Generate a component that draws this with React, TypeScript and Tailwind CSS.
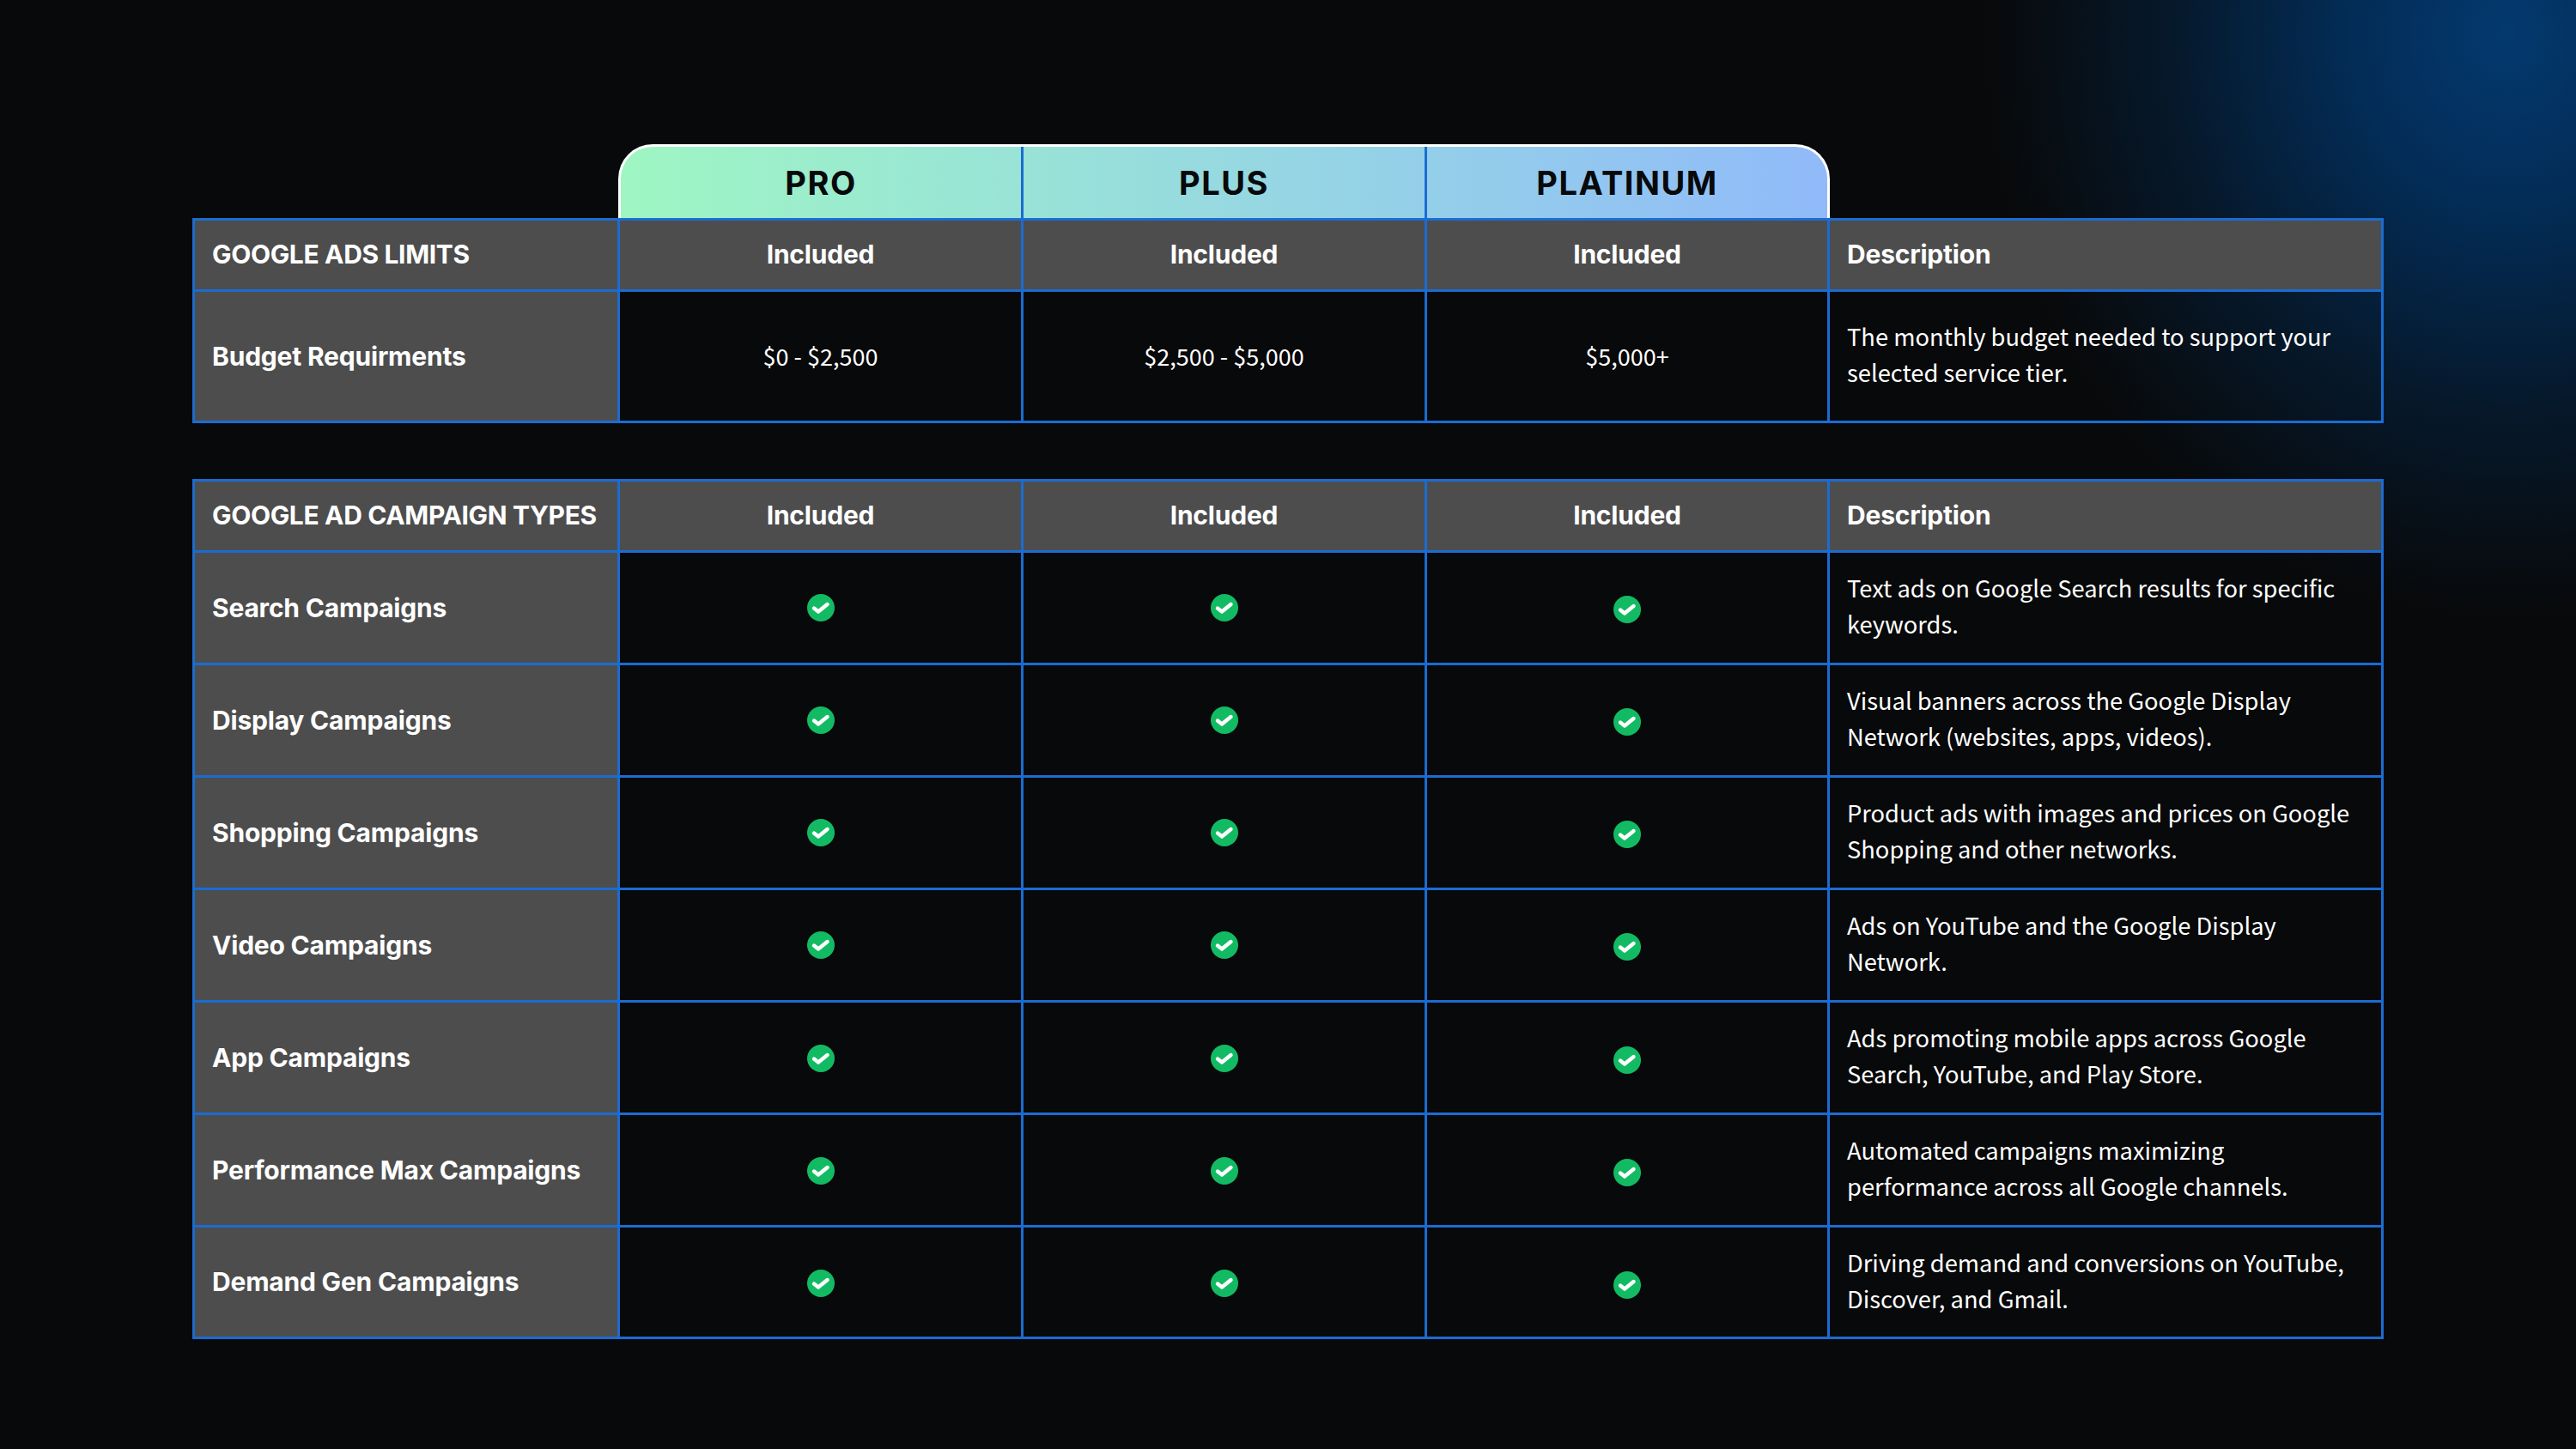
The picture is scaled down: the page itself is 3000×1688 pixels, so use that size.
import React from "react";

const heading = "font-['Inter','Liberation_Sans',sans-serif]";
const body = "font-['Noto_Sans_CJK_JP','Noto_Sans',sans-serif]";
const grid = "grid grid-cols-[495px_470px_470px_469px_1fr]";
const line = "border-[#1b6cd2]";

const campaigns = [
  ["Search Campaigns", "Text ads on Google Search results for specific", "keywords."],
  ["Display Campaigns", "Visual banners across the Google Display", "Network (websites, apps, videos)."],
  ["Shopping Campaigns", "Product ads with images and prices on Google", "Shopping and other networks."],
  ["Video Campaigns", "Ads on YouTube and the Google Display", "Network."],
  ["App Campaigns", "Ads promoting mobile apps across Google", "Search, YouTube, and Play Store."],
  ["Performance Max Campaigns", "Automated campaigns maximizing", "performance across all Google channels."],
  ["Demand Gen Campaigns", "Driving demand and conversions on YouTube,", "Discover, and Gmail."],
];

const Check = ({ low, drift = 0 }: { low?: boolean; drift?: number }) => (
  <svg width="32" height="32" viewBox="0 0 32 32" style={{ marginTop: (low ? 3 : -1) + drift }}>
    <circle cx="16" cy="16" r="16" fill="#12bb63" />
    <path d="M8 16.5 L13 20.5 L23.5 12" fill="none" stroke="#fff" strokeWidth="4.4" strokeLinecap="round" strokeLinejoin="round" />
  </svg>
);

const HeaderRow = ({ title }: { title: string }) => (
  <div className={`${grid} h-[83px] border-b-[3px] ${line} bg-[#4d4d4d] ${heading} text-[30px] font-bold text-white`}>
    <div className={`flex items-center pl-[20px] pb-[1px] border-r-[3px] ${line} tracking-[-0.35px] whitespace-nowrap`}>{title}</div>
    {[0, 1, 2].map((i) => (
      <div key={i} className={`flex items-center justify-center pb-[1px] border-r-[3px] ${line} tracking-[-0.2px]`}>Included</div>
    ))}
    <div className="flex items-center pl-[20px] pb-[1px] tracking-[-0.2px]">Description</div>
  </div>
);

const Row = ({ label, height, last, cells, lines }: { label: string; height: string; last?: boolean; cells: React.ReactNode[]; lines: string[] }) => (
  <div className={`${grid} ${height} ${last ? "" : `border-b-[3px] ${line}`}`}>
    <div className={`flex items-center pl-[20px] bg-[#4d4d4d] border-r-[3px] ${line} ${heading} text-[30px] font-bold text-white tracking-[-0.2px]`}>{label}</div>
    {cells.map((cell, i) => (
      <div key={i} className={`flex items-center justify-center border-r-[3px] ${line} ${body} text-[27px] text-white`}>{cell}</div>
    ))}
    <div className={`flex flex-col justify-center pl-[20px] pb-[6px] ${body} text-[27.3px] leading-[42px] text-white whitespace-nowrap`}>
      {lines.map((l) => (
        <div key={l}>{l}</div>
      ))}
    </div>
  </div>
);

export default function App() {
  return (
    <div className="w-[3000px] h-[1688px] overflow-hidden bg-[#08090a] bg-[radial-gradient(ellipse_610px_680px_at_2920px_40px,#04396f_0%,#032c56_30%,#06182a_65%,#08090a_100%)] pt-[168px] pl-[224px]">
      <div className={`ml-[496px] w-[1411px] h-[86px] grid grid-cols-[469px_470px_1fr] rounded-t-[40px] border-t-[3px] border-x-[3px] border-white bg-gradient-to-r from-[#9ef6c2] to-[#90baf9] ${heading} text-[38px] font-bold text-[#08090b] tracking-[1.5px]`}>
        <div className="flex items-center justify-center pt-[2px] border-r-[3px] border-[#1b6cd2]">PRO</div>
        <div className="flex items-center justify-center pt-[2px] border-r-[3px] border-[#1b6cd2]">PLUS</div>
        <div className="flex items-center justify-center pt-[2px]">PLATINUM</div>
      </div>

      <div className={`w-[2552px] border-[3px] ${line}`}>
        <HeaderRow title="GOOGLE ADS LIMITS" />
        <Row
          label="Budget Requirments"
          height="h-[150px]"
          last
          cells={["$0 - $2,500", "$2,500 - $5,000", "$5,000+"]}
          lines={["The monthly budget needed to support your", "selected service tier."]}
        />
      </div>

      <div className={`mt-[65px] w-[2552px] border-[3px] ${line}`}>
        <HeaderRow title="GOOGLE AD CAMPAIGN TYPES" />
        {campaigns.map(([label, a, b], i) => (
          <Row
            key={label}
            label={label}
            height={i === campaigns.length - 1 ? "h-[127px]" : "h-[131px]"}
            last={i === campaigns.length - 1}
            cells={[<Check drift={i * 0.6} />, <Check drift={i * 0.6} />, <Check low drift={i * 0.6} />]}
            lines={[a, b]}
          />
        ))}
      </div>
    </div>
  );
}
